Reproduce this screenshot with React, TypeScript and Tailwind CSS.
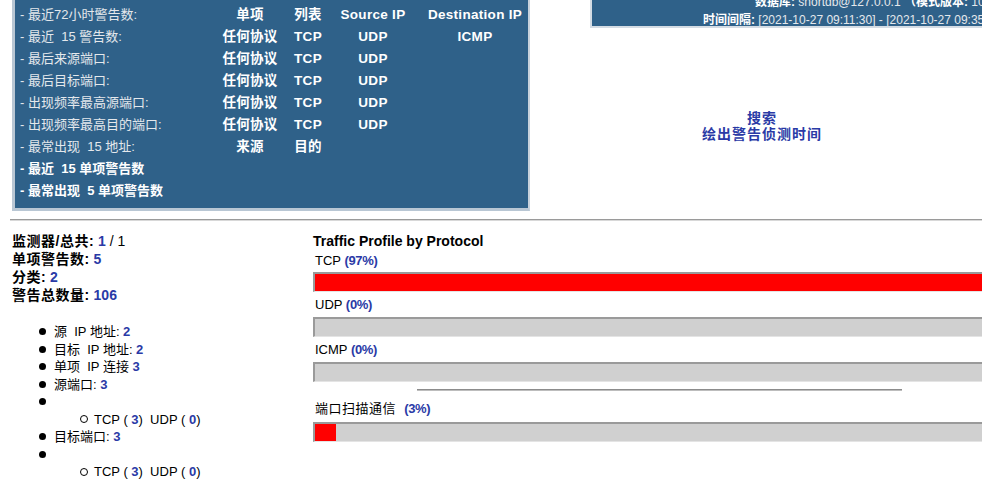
const FONT = "font-['Liberation_Sans','Noto_Sans_CJK_SC',sans-serif]";

type PanelRow = {
  label: string;
  bold?: boolean;
  cells: string[];
};

const panelRows: PanelRow[] = [
  { label: "- 最近72小时警告数:", cells: ["单项", "列表", "Source IP", "Destination IP"] },
  { label: "- 最近  15 警告数:", cells: ["任何协议", "TCP", "UDP", "ICMP"] },
  { label: "- 最后来源端口:", cells: ["任何协议", "TCP", "UDP", ""] },
  { label: "- 最后目标端口:", cells: ["任何协议", "TCP", "UDP", ""] },
  { label: "- 出现频率最高源端口:", cells: ["任何协议", "TCP", "UDP", ""] },
  { label: "- 出现频率最高目的端口:", cells: ["任何协议", "TCP", "UDP", ""] },
  { label: "- 最常出现  15 地址:", cells: ["来源", "目的", "", ""] },
  { label: "- 最近  15 单项警告数", bold: true, cells: ["", "", "", ""] },
  { label: "- 最常出现  5 单项警告数", bold: true, cells: ["", "", "", ""] },
];

const bars = [
  { label: "TCP", pct: 97 },
  { label: "UDP", pct: 0 },
  { label: "ICMP", pct: 0 },
];

function Bar({ pct }: { pct: number }) {
  return (
    <div className="h-[20px] w-[693px] border-t-2 border-l-2 border-b border-r border-t-[#9a9a9a] border-l-[#9a9a9a] border-b-[#e4e4e4] border-r-[#e4e4e4] bg-[#d0d0d0]">
      <div className="h-full bg-[#ff0000]" style={{ width: `${pct}%` }} />
    </div>
  );
}

function Num({ children }: { children: React.ReactNode }) {
  return <span className="font-bold text-[#2a3aa6]">{children}</span>;
}

function Dot() {
  return <span className="mr-[8px] inline-block h-[7px] w-[7px] rounded-full bg-black" />;
}

function Ring() {
  return (
    <span className="mr-[6px] inline-block h-[8px] w-[8px] rounded-full border-[1.5px] border-black" />
  );
}

export default function App() {
  return (
    <div className={`${FONT} relative h-[487px] w-[982px] overflow-hidden bg-white text-black`}>
      {/* top area */}
      <div className="flex h-[212px]">
        <div className="ml-[12px] h-[211px] w-[518px] shrink-0 overflow-hidden border-l-[3px] border-b-[3px] border-r-2 border-l-[#b9c7d4] border-b-[#b9c7d4] border-r-[#c8d2dc] bg-[#2f6189] pl-[5px] pt-[4px] text-[13px]">
          {panelRows.map((row, i) => (
            <div key={i} className="grid h-[22px] grid-cols-[195px_70px_46px_84px_120px] items-center whitespace-pre">
              <div className={row.bold ? "font-bold text-white" : "text-[#e4e8ec]"}>{row.label}</div>
              {row.cells.map((c, j) => (
                <div key={j} className="text-center text-[13.5px] font-bold tracking-[0.3px] text-white">
                  {c}
                </div>
              ))}
            </div>
          ))}
        </div>

        <div className="min-w-0 flex-1">
          <div className="ml-[60px] h-[28px] w-[420px] overflow-hidden border-b-2 border-l-2 border-b-[#d4dce4] border-l-[#d4dce4] bg-[#2f6189] text-[12px] leading-[18px] text-[#e4e8ec]">
            <div className="-mt-[7px] whitespace-nowrap pl-[163px]">
              <span className="font-bold text-white">数据库:</span> snortdb@127.0.0.1{"   "}
              <span className="font-bold text-white">（模式版本:</span> 107)
            </div>
            <div className="whitespace-nowrap pl-[111px]">
              <span className="font-bold text-white">时间间隔:</span> [2021-10-27 09:11:30] - [2021-10-27 09:35:12]
            </div>
          </div>
          <div className="mt-[82px] pl-[12px] text-center text-[14px] font-bold leading-[16px] tracking-[1px] text-[#2a3aa6]">
            <div>搜索</div>
            <div>绘出警告侦测时间</div>
          </div>
        </div>
      </div>

      {/* divider */}
      <div className="ml-[10px] mt-[7px] h-[2px] border-t border-b border-t-[#9a9a9a] border-b-[#d8d8d8]" />

      {/* bottom area */}
      <div className="flex pt-[11px]">
        <div className="w-[313px] shrink-0 pl-[12px]">
          <div className="text-[14px] leading-[18px]">
            <div>
              <span className="font-bold tracking-[0.5px]">监测器/总共:</span> <Num>1</Num> / 1
            </div>
            <div>
              <span className="font-bold tracking-[0.5px]">单项警告数:</span> <Num>5</Num>
            </div>
            <div>
              <span className="font-bold tracking-[0.5px]">分类:</span> <Num>2</Num>
            </div>
            <div>
              <span className="font-bold tracking-[0.5px]">警告总数量:</span> <Num>106</Num>
            </div>
          </div>

          <div className="mt-[19px] pl-[27px] text-[13px] leading-[17.5px]">
            <div className="flex items-center">
              <Dot />
              <span className="whitespace-pre">源  IP 地址: </span>
              <Num>2</Num>
            </div>
            <div className="flex items-center">
              <Dot />
              <span className="whitespace-pre">目标  IP 地址: </span>
              <Num>2</Num>
            </div>
            <div className="flex items-center">
              <Dot />
              <span className="whitespace-pre">单项  IP 连接 </span>
              <Num>3</Num>
            </div>
            <div className="flex items-center">
              <Dot />
              <span className="whitespace-pre">源端口: </span>
              <Num>3</Num>
            </div>
            <div className="flex h-[17.5px] items-center">
              <Dot />
            </div>
            <div className="flex items-center pl-[41px]">
              <Ring />
              <span className="whitespace-pre">TCP ( </span>
              <Num>3</Num>
              <span className="whitespace-pre">)  UDP ( </span>
              <Num>0</Num>
              <span>)</span>
            </div>
            <div className="flex items-center">
              <Dot />
              <span className="whitespace-pre">目标端口: </span>
              <Num>3</Num>
            </div>
            <div className="flex h-[17.5px] items-center">
              <Dot />
            </div>
            <div className="flex items-center pl-[41px]">
              <Ring />
              <span className="whitespace-pre">TCP ( </span>
              <Num>3</Num>
              <span className="whitespace-pre">)  UDP ( </span>
              <Num>0</Num>
              <span>)</span>
            </div>
          </div>
        </div>

        <div className="shrink-0 text-[13px]">
          <div className="text-[14px] font-bold leading-[18px]">Traffic Profile by Protocol</div>
          {bars.map((b, i) => (
            <div key={b.label} className={i === 0 ? "mt-[2px]" : "mt-[4px]"}>
              <div className="pl-[2px] leading-[18px]">
                {b.label} <span className="font-bold tracking-[-0.3px] text-[#2a3aa6]">({b.pct}%)</span>
              </div>
              <div className={i === 0 ? "mt-[2px]" : "mt-[3px]"}>
                <Bar pct={b.pct} />
              </div>
            </div>
          ))}
          <div className="mx-auto mt-[7px] h-[2px] w-[485px] border-t border-b border-t-[#8c8c8c] border-b-[#bdbdbd]" />
          <div className="mt-[9px] pl-[2px] leading-[18px] tracking-[0.5px]">
            端口扫描通信 <span className="ml-[4px] font-bold tracking-[-0.3px] text-[#2a3aa6]">(3%)</span>
          </div>
          <div className="mt-[4px]">
            <Bar pct={3} />
          </div>
        </div>
      </div>
    </div>
  );
}
